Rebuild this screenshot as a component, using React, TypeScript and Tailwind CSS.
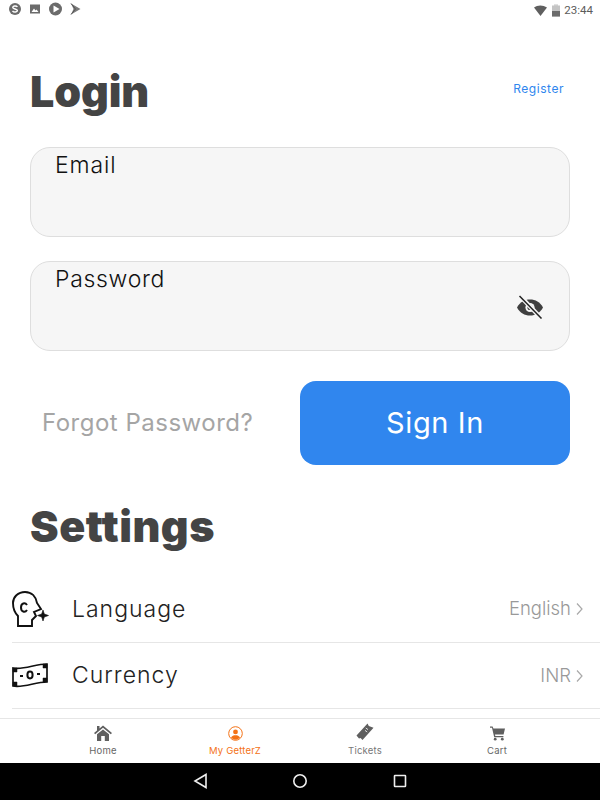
import React from "react";

const Chevron = () => (
  <svg width="8" height="14" viewBox="0 0 8 14" className="ml-[5px]" fill="none" stroke="#a9a9a9" strokeWidth="1.2">
    <path d="M1 1.5 L6 7 L1 12.5" />
  </svg>
);

const Head = () => (
  <svg width="38" height="38" viewBox="0 0 38 38" fill="none" stroke="#111" strokeWidth="1.9">
    <path d="M20 36 H6 V26 C3 23 1 18 1 13 C1 7 6 2 13 2 C20 2 24 7 25 13 L29 19 L22 22 L24 26 L21 29 L20 30 Z" />
    <path d="M15 15 C13 12 9 13 9 17.5 C9 22 13 23 15 20" strokeWidth="2" />
    <path d="M31 20 L32.3 24 L36.5 25.5 L32.3 27 L31 31 L29.7 27 L25.5 25.5 L29.7 24 Z" fill="#111" strokeWidth="0.6" />
  </svg>
);

const Money = () => (
  <svg width="36" height="25" viewBox="0 0 36 25" fill="none" stroke="#111" strokeWidth="1.7">
    <path d="M1 5 C12 7 23 1 35 1 V19 C23 19 12 25 1 23 Z" />
    <path d="M1 5 H5 V9 H1 Z M31 1 H35 V5 H31 Z M1 19 H5 V23 H1 Z M31 15 H35 V19 H31 Z" fill="#111" strokeWidth="0.5" />
    <ellipse cx="18" cy="12" rx="2.6" ry="3.4" strokeWidth="2" />
    <path d="M8 13 H11 M25 11 H28" strokeWidth="2" />
  </svg>
);

const Home = () => (
  <svg width="18" height="16" viewBox="0 0 18 16" fill="#5f5f5f">
    <path d="M9 0.5 L18 8 L16.8 9.2 L9 2.8 L1.2 9.2 L0 8 L3 5.5 V1 H5.5 V3.4 Z" />
    <path d="M3 9.3 L9 4.4 L15 9.3 V16 H10.8 V11 H7.2 V16 H3 Z" />
  </svg>
);

const User = () => (
  <svg width="15" height="15" viewBox="0 0 15 15" fill="none">
    <circle cx="7.5" cy="7.5" r="6.8" stroke="#f47216" strokeWidth="1" />
    <circle cx="7.5" cy="5.9" r="2.4" fill="#f47216" />
    <path d="M3 11.6 C4 9.8 5.6 9.2 7.5 9.2 C9.4 9.2 11 9.8 12 11.6 C10.8 13 9.2 13.7 7.5 13.7 C5.8 13.7 4.2 13 3 11.6 Z" fill="#f47216" />
  </svg>
);

const Ticket = () => (
  <svg width="18" height="18" viewBox="0 0 18 18">
    <path d="M11.5 0.5 L12.8 3 L17.5 4.8 L16 6.5 L6.5 17 L4.6 14.9 L3 15.5 L0.5 12.5 Z" fill="#5f5f5f" />
    <path d="M9.8 5 L12 6.6 M9 7.4 L11.2 9" stroke="#fff" strokeWidth="0.8" />
  </svg>
);

const Cart = () => (
  <svg width="15" height="15" viewBox="0 0 15 15" fill="#5f5f5f">
    <path d="M0 0.5 H2.6 L3.4 2.4 H15 L13.6 8.6 H5 L5.3 10 H13.4 V11.2 H4.2 L2 1.7 H0 Z" />
    <circle cx="5.2" cy="13.2" r="1.4" />
    <circle cx="12.3" cy="13.2" r="1.4" />
  </svg>
);

const Eye = () => (
  <svg width="28" height="24" viewBox="0 0 28 24">
    <path d="M1 12.5 C4 7 8.5 4.5 14 4.5 C19.5 4.5 24 7 27 12.5 C24 18 19.5 20.5 14 20.5 C8.5 20.5 4 18 1 12.5 Z" fill="#3f3f3f" />
    <circle cx="14" cy="12.5" r="4.6" fill="#f6f6f6" />
    <circle cx="14" cy="12.5" r="2.6" fill="#3f3f3f" />
    <path d="M4 1 L25 23" stroke="#f6f6f6" strokeWidth="4.4" />
    <path d="M3.5 1 L25.5 23.5" stroke="#222" strokeWidth="1.5" />
  </svg>
);

function NavItem({ icon, label, color, className }: { icon: React.ReactNode; label: string; color: string; className: string }) {
  return (
    <div className={`flex h-[44px] flex-col items-center ${className}`}>
      <div className="flex h-[23px] items-end pb-[1px]">{icon}</div>
      <span className="mt-[2px] text-[9.5px] leading-[13px] tracking-[0.2px]" style={{ color }}>{label}</span>
    </div>
  );
}

function Row({ icon, label, value, className }: { icon: React.ReactNode; label: string; value: string; className: string }) {
  return (
    <div className={`ml-[12px] flex items-center border-b border-[#e6e6e6] pr-[16px] ${className}`}>
      <div className="flex w-[60px] items-center">{icon}</div>
      <span className="text-[23px] font-light tracking-[1px] text-[#222]">{label}</span>
      <span className="ml-auto text-[18.5px] font-light text-[#999]">{value}</span>
      <Chevron />
    </div>
  );
}

export default function App() {
  return (
    <div className="flex h-[800px] w-[600px] flex-col overflow-hidden bg-white font-['Inter','Liberation_Sans',sans-serif]">
      <div className="flex h-[24px] items-start px-[9px] pt-[2px]">
        <svg width="90" height="14" viewBox="0 0 90 14">
          <circle cx="6" cy="7" r="6" fill="#6b6b6b" />
          <path d="M8.4 5 C7.4 3.4 3.6 3.6 3.8 5.6 C4 7.2 8.4 6.8 8.4 8.6 C8.4 10.4 4.6 10.6 3.5 8.8" stroke="#fff" strokeWidth="1.4" fill="none" />
          <rect x="21" y="2.5" width="10" height="9" fill="#6b6b6b" />
          <path d="M22.5 10 L25 6.5 L26.5 8.5 L27.5 7.5 L29.5 10 Z" fill="#fff" />
          <circle cx="46.5" cy="7" r="6.5" fill="#6b6b6b" />
          <path d="M44.5 3.6 L50.5 7 L44.5 10.4 Z" fill="#fff" />
          <path d="M62 1.5 L71.5 7 L62 12.5 L64.5 7 Z" fill="#7a7a7a" />
          <path d="M62 1.5 L66.5 7 L62 12.5" fill="none" stroke="#555" strokeWidth="1" />
        </svg>
        <div className="ml-auto mr-[-2px] flex items-center">
          <svg width="31" height="14" viewBox="0 0 31 14">
            <path d="M1 3.5 C4.5 0.8 10 0.8 14 3.5 L7.5 12 Z" fill="#5f5f5f" />
            <rect x="19" y="1.5" width="8" height="11" fill="#c4c4c4" />
            <rect x="19" y="7" width="8" height="5.5" fill="#6b6b6b" />
            <rect x="21" y="0.5" width="4" height="1.2" fill="#c4c4c4" />
          </svg>
          <span className="font-['Roboto',sans-serif] text-[11.5px] text-[#5c5c5c]">23:44</span>
        </div>
      </div>

      <div className="flex min-h-0 flex-1 flex-col">
        <div className="mt-[38px] flex h-[58px] items-center justify-between pl-[30px] pr-[36px]">
          <h1 className="text-[43px] font-black tracking-[-0.1px] text-[#444]">Login</h1>
          <span className="mt-[-4px] text-[12px] tracking-[0.55px] text-[#2f86ee]">Register</span>
        </div>

        <div className="mx-[30px] mt-[27px] h-[90px] rounded-[20px] border border-[#dedede] bg-[#f6f6f6] pl-[24px] pt-[1px]">
          <span className="text-[23px] font-light leading-[33px] tracking-[0.9px] text-[#111]">Email</span>
        </div>

        <div className="mx-[30px] mt-[24px] flex h-[90px] justify-between rounded-[20px] border border-[#dedede] bg-[#f6f6f6] pl-[24px] pr-[25px] pt-[1px]">
          <span className="text-[23px] font-light leading-[33px] tracking-[0.7px] text-[#111]">Password</span>
          <div className="pt-[32px]"><Eye /></div>
        </div>

        <div className="mx-[30px] mt-[30px] flex h-[84px] items-center">
          <span className="w-[270px] pl-[12px] text-[24px] tracking-[0.5px] text-[#a5a5a5]">Forgot Password?</span>
          <div className="flex h-full w-[270px] items-center justify-center rounded-[16px] bg-[#3086ee] text-[29px] tracking-[0.6px] text-white">Sign In</div>
        </div>

        <h2 className="mt-[31px] h-[60px] pl-[30px] text-[43px] font-black leading-[60px] tracking-[0.5px] text-[#444]">Settings</h2>

        <Row className="mt-[20px] h-[67px]" icon={<Head />} label="Language" value="English" />
        <Row className="h-[66px]" icon={<Money />} label="Currency" value="INR" />
      </div>

      <div className="flex h-[45px] border-t border-[#e6e6e6] bg-white">
        <NavItem className="w-[206px]" icon={<Home />} label="Home" color="#666" />
        <NavItem className="w-[58px]" icon={<User />} label="My GetterZ" color="#f47216" />
        <NavItem className="ml-[76px] w-[50px]" icon={<Ticket />} label="Tickets" color="#777" />
        <NavItem className="ml-[82px] w-[50px]" icon={<Cart />} label="Cart" color="#666" />
      </div>

      <div className="flex h-[37px] items-center justify-center gap-[83px] bg-black pb-[1px]">
        <svg width="16" height="16" viewBox="0 0 16 16" fill="none" stroke="#eee" strokeWidth="1.6"><path d="M13 1.5 V14.5 L2 8 Z" /></svg>
        <svg width="16" height="16" viewBox="0 0 16 16" fill="none" stroke="#eee" strokeWidth="1.6"><circle cx="8" cy="8" r="6.2" /></svg>
        <svg width="16" height="16" viewBox="0 0 16 16" fill="none" stroke="#eee" strokeWidth="1.6" className="ml-[1px]"><rect x="2.5" y="2.5" width="11" height="11" rx="0.5" /></svg>
      </div>
    </div>
  );
}
